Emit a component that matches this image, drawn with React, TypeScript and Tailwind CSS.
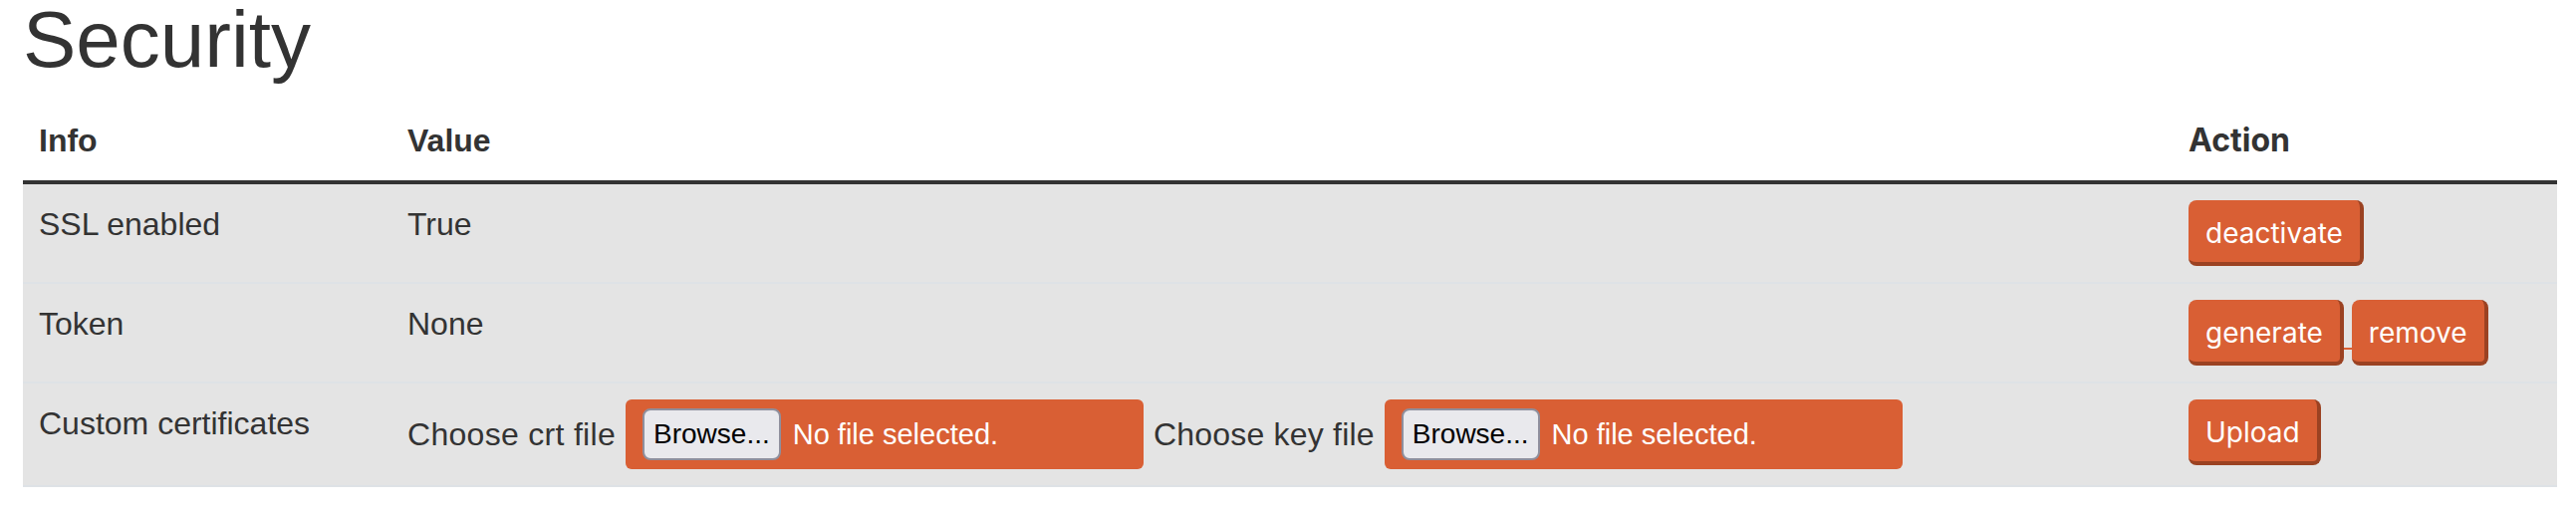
import React from 'react';

// --- SMALL PIECES ---

function ActionButton({ children }: { children: React.ReactNode }) {
  return (
    <button className="rounded-[8px] border-r-4 border-b-4 border-[#9b4222] bg-[#d95f34] px-[17px] pt-[12px] pb-[8px] font-['Inter',sans-serif] text-[28px] leading-[42px] text-white">
      {children}
    </button>
  );
}

function FileField() {
  return (
    <div className="flex h-[70px] w-[520px] items-center gap-[12px] rounded-[6px] bg-[#d95f34] pl-[17px]">
      <button className="flex h-[52px] items-center rounded-[8px] border-2 border-[#8f8f9d] bg-[#e9e9ed] px-[9px] text-[28px] leading-[34px] text-black">
        Browse...
      </button>
      <span className="text-[29px] leading-[40px] text-white">No file selected.</span>
    </div>
  );
}

export default function App() {
  return (
    <main className="min-h-screen bg-white px-[23px] font-['Liberation_Sans',Arial,sans-serif] text-[#333]">
      <h1 className="mb-[21px] text-[80px] font-normal leading-[80px]">Security</h1>

      <table className="w-[2544px] table-fixed border-separate border-spacing-0 text-[32px] leading-[48px]">
        <colgroup>
          <col className="w-[370px]" />
          <col className="w-[1788px]" />
          <col className="w-[386px]" />
        </colgroup>
        <thead>
          <tr>
            <th className="border-b-4 border-[#333] p-4 text-left align-top font-bold">Info</th>
            <th className="border-b-4 border-[#333] p-4 text-left align-top font-bold">Value</th>
            <th className="border-b-4 border-[#333] p-4 text-left align-top font-['Inter',sans-serif] font-bold">Action</th>
          </tr>
        </thead>
        <tbody>
          {/* SSL */}
          <tr className="bg-[#e4e4e4]">
            <td className="p-4 align-top">SSL enabled</td>
            <td className="p-4 align-top">True</td>
            <td className="p-4 align-top">
              <ActionButton>deactivate</ActionButton>
            </td>
          </tr>

          {/* TOKEN */}
          <tr className="bg-[#e4e4e4]">
            <td className="border-t-2 border-[#dee2e6] p-4 align-top">Token</td>
            <td className="border-t-2 border-[#dee2e6] p-4 align-top">None</td>
            <td className="border-t-2 border-[#dee2e6] p-4 align-top">
              <div className="flex items-start">
                <ActionButton>generate</ActionButton>
                <span className="mt-[48px] h-[2px] w-[8px] bg-[#d95f34]"></span>
                <ActionButton>remove</ActionButton>
              </div>
            </td>
          </tr>

          {/* CERTIFICATES */}
          <tr className="bg-[#e4e4e4]">
            <td className="border-y-2 border-[#dee2e6] p-4 align-top">Custom certificates</td>
            <td className="border-y-2 border-[#dee2e6] p-4 align-top">
              <div className="flex items-center gap-[10px]">
                <span className="tracking-[0.3px]">Choose crt file</span>
                <FileField />
                <span className="tracking-[0.2px]">Choose key file</span>
                <FileField />
              </div>
            </td>
            <td className="border-y-2 border-[#dee2e6] p-4 align-top">
              <ActionButton>Upload</ActionButton>
            </td>
          </tr>
        </tbody>
      </table>
    </main>
  );
}
